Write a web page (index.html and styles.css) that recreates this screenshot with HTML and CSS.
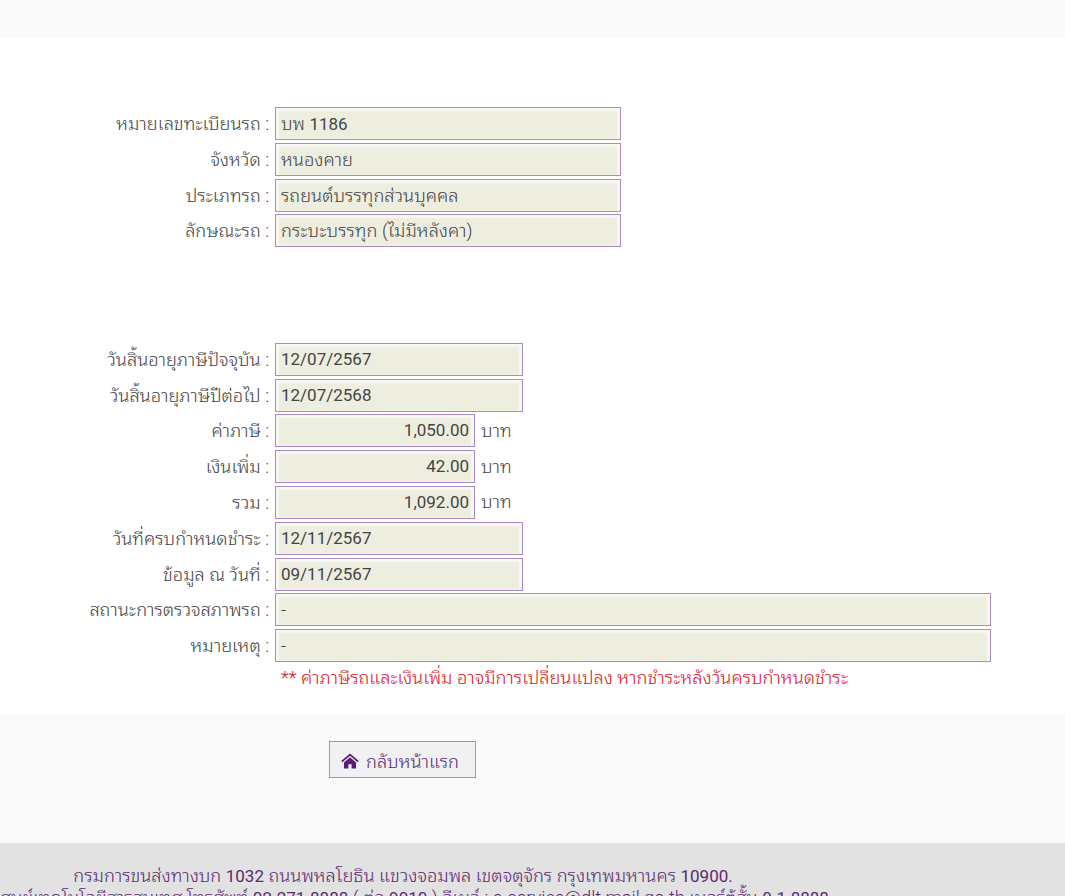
FILE: index.html
```
<!DOCTYPE html>
<html>
<head>
<meta charset="utf-8">
<title>ผลการตรวจสอบ</title>
<link rel="stylesheet" href="styles.css">
</head>
<body>
<div class="top-band"></div>
<main class="content">
  <section class="form form-vehicle">
    <div class="row"><span class="label">หมายเลขทะเบียนรถ :</span><span class="field w-l">บพ <span class="digits">1186</span></span></div>
    <div class="row"><span class="label">จังหวัด :</span><span class="field w-l">หนองคาย</span></div>
    <div class="row"><span class="label">ประเภทรถ :</span><span class="field w-l">รถยนต์บรรทุกส่วนบุคคล</span></div>
    <div class="row"><span class="label">ลักษณะรถ :</span><span class="field w-l">กระบะบรรทุก (ไม่มีหลังคา)</span></div>
  </section>
  <section class="form form-tax">
    <div class="row"><span class="label">วันสิ้นอายุภาษีปัจจุบัน :</span><span class="field w-m digits">12/07/2567</span></div>
    <div class="row"><span class="label">วันสิ้นอายุภาษีปีต่อไป :</span><span class="field w-m digits">12/07/2568</span></div>
    <div class="row"><span class="label">ค่าภาษี :</span><span class="field w-s num digits">1,050.00</span><span class="unit">บาท</span></div>
    <div class="row"><span class="label">เงินเพิ่ม :</span><span class="field w-s num digits">42.00</span><span class="unit">บาท</span></div>
    <div class="row"><span class="label">รวม :</span><span class="field w-s num digits">1,092.00</span><span class="unit">บาท</span></div>
    <div class="row"><span class="label">วันที่ครบกำหนดชำระ :</span><span class="field w-m digits">12/11/2567</span></div>
    <div class="row"><span class="label">ข้อมูล ณ วันที่ :</span><span class="field w-m digits">09/11/2567</span></div>
    <div class="row"><span class="label">สถานะการตรวจสภาพรถ :</span><span class="field w-xl">-</span></div>
    <div class="row"><span class="label">หมายเหตุ :</span><span class="field w-xl">-</span></div>
    <p class="note">** ค่าภาษีรถและเงินเพิ่ม อาจมีการเปลี่ยนแปลง หากชำระหลังวันครบกำหนดชำระ</p>
  </section>
</main>
<div class="action-band">
  <a class="home-btn" href="#">
    <svg class="home-icon" viewBox="0 0 18 16" aria-hidden="true"><path d="M9 0.4 L17.8 8 L16.6 9.2 L9 2.8 L1.4 9.2 L0.2 8 Z"/><path fill-rule="evenodd" d="M9 4.2 L15 9.4 V15.6 H10.6 V11.2 H7.4 V15.6 H3 V9.4 Z"/></svg>
    <span>กลับหน้าแรก</span>
  </a>
</div>
<footer class="footer">
  <div class="footer-text">
    <div class="footer-line">กรมการขนส่งทางบก <span class="digits">1032</span> ถนนพหลโยธิน แขวงจอมพล เขตจตุจักร กรุงเทพมหานคร <span class="digits">10900.</span></div>
    <div class="footer-line">ศูนย์เทคโนโลยีสารสนเทศ โทรศัพท์ <span class="digits">02-271-8888</span> ( ต่อ <span class="digits">9010</span> ) อีเมล์ : e-service@dlt.mail.go.th เบอร์ตู้สั้น <span class="digits">0-1-8888</span></div>
  </div>
</footer>
</body>
</html>
```
FILE: styles.css
```
html, body {
  margin: 0;
  padding: 0;
  background: #fff;
}
body {
  font-family: Roboto, "Noto Sans Thai Looped", sans-serif;
  font-size: 18.3px;
  font-weight: 300;
  color: #444;
  overflow-x: hidden;
}
.digits {
  font-size: 17px;
  font-weight: 400;
}
.top-band {
  height: 38px;
  background: #fafafa;
}
.content {
  height: 677px;
  padding-top: 67.6px;
  box-sizing: border-box;
}
.form-tax {
  margin-top: 92.6px;
}
.row {
  display: flex;
  align-items: center;
  height: 35.8px;
}
.label {
  width: 269px;
  margin-right: 6px;
  padding-top: 1px;
  text-align: right;
  white-space: nowrap;
  line-height: 24px;
}
.field {
  box-sizing: border-box;
  height: 33px;
  line-height: 31px;
  padding: 0 5px;
  border: 1px solid #a98cc6;
  background: #eeeee0;
  box-shadow: inset 0 3px 1px #f8f8f2, inset 3px 0 1px #f8f8f2, inset -3px 0 1px #f8f8f2;
  white-space: nowrap;
}
.w-l { width: 346px; }
.w-m { width: 248px; }
.w-s { width: 200px; }
.w-xl { width: 716px; }
.num { text-align: right; }
.unit { margin-left: 6px; line-height: 24px; }
.note {
  margin: 0 0 0 281px;
  color: #e0121a;
  line-height: 28px;
}
.action-band {
  height: 128px;
  background: #fafafa;
  padding: 26px 0 0 329px;
  box-sizing: border-box;
}
.home-btn {
  display: inline-flex;
  align-items: center;
  gap: 7px;
  box-sizing: border-box;
  width: 147px;
  height: 37px;
  padding-left: 11px;
  border: 1px solid #a98cc6;
  background: #f1f0f2;
  color: #5b2a72;
  text-decoration: none;
}
.home-icon {
  width: 18px;
  height: 16px;
  fill: #5b1a78;
  margin-top: 2px;
}
.footer {
  background: #e2e2e2;
  color: #5b2a72;
  padding-top: 22px;
  padding-bottom: 20px;
}
.footer-text {
  width: 806px;
}
.footer-line {
  text-align: center;
  white-space: nowrap;
  line-height: 22px;
}
```
